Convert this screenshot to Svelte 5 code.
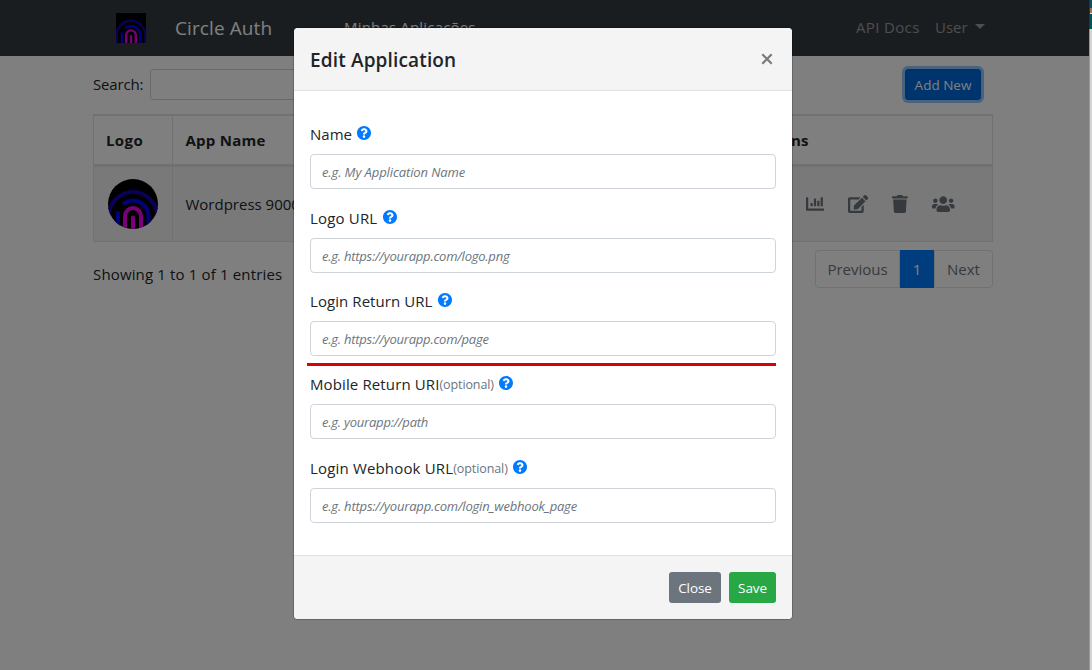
<script>
  const fields = [
    { label: 'Name', placeholder: 'e.g. My Application Name', k: 'a' },
    { label: 'Logo URL', placeholder: 'e.g. https://yourapp.com/logo.png', k: 'b' },
    { label: 'Login Return URL', placeholder: 'e.g. https://yourapp.com/page', k: 'c', marked: true },
    { label: 'Mobile Return URI', optional: true, placeholder: 'e.g. yourapp://path', k: 'd' },
    { label: 'Login Webhook URL', optional: true, placeholder: 'e.g. https://yourapp.com/login_webhook_page', k: 'e' }
  ];
  const actions = [
    { name: 'Statistics', w: 512, d: 'M332.8 320h38.4c6.4 0 12.8-6.4 12.8-12.8V172.8c0-6.4-6.4-12.8-12.8-12.8h-38.4c-6.4 0-12.8 6.4-12.8 12.8v134.4c0 6.4 6.4 12.8 12.8 12.8zm96 0h38.4c6.4 0 12.8-6.4 12.8-12.8V76.8c0-6.4-6.4-12.8-12.8-12.8h-38.4c-6.4 0-12.8 6.4-12.8 12.8v230.4c0 6.4 6.4 12.8 12.8 12.8zm-288 0h38.4c6.4 0 12.8-6.4 12.8-12.8v-70.4c0-6.4-6.4-12.8-12.8-12.8h-38.4c-6.4 0-12.8 6.4-12.8 12.8v70.4c0 6.4 6.4 12.8 12.8 12.8zm96 0h38.4c6.4 0 12.8-6.4 12.8-12.8V108.8c0-6.4-6.4-12.8-12.8-12.8h-38.4c-6.4 0-12.8 6.4-12.8 12.8v198.4c0 6.4 6.4 12.8 12.8 12.8zM496 384H64V80c0-8.84-7.16-16-16-16H16C7.16 64 0 71.16 0 80v336c0 17.67 14.33 32 32 32h464c8.84 0 16-7.16 16-16v-32c0-8.84-7.16-16-16-16z' },
    { name: 'Edit', w: 576, d: 'M402.6 83.2l90.2 90.2c3.8 3.8 3.8 10 0 13.8L274.4 405.6l-92.8 10.3c-12.4 1.4-22.9-9.1-21.5-21.5l10.3-92.8L388.8 83.2c3.8-3.8 10-3.8 13.8 0zm162-22.9l-48.8-48.8c-15.2-15.2-39.9-15.2-55.2 0l-35.4 35.4c-3.8 3.8-3.8 10 0 13.8l90.2 90.2c3.8 3.8 10 3.8 13.8 0l35.4-35.4c15.2-15.3 15.2-40 0-55.2zM384 346.2V448H64V128h229.8c3.2 0 6.2-1.3 8.5-3.5l40-40c7.6-7.6 2.2-20.5-8.5-20.5H48C21.5 64 0 85.5 0 112v352c0 26.5 21.5 48 48 48h352c26.5 0 48-21.5 48-48V306.2c0-10.7-12.9-16-20.5-8.5l-40 40c-2.2 2.3-3.5 5.3-3.5 8.5z' },
    { name: 'Delete', w: 448, d: 'M432 32H312l-9.4-18.7A24 24 0 0 0 281.1 0H166.8a23.72 23.72 0 0 0-21.4 13.3L136 32H16A16 16 0 0 0 0 48v32a16 16 0 0 0 16 16h416a16 16 0 0 0 16-16V48a16 16 0 0 0-16-16zM53.2 467a48 48 0 0 0 47.9 45h245.8a48 48 0 0 0 47.9-45L416 128H32z' },
    { name: 'Users', w: 640, d: 'M96 224c35.3 0 64-28.7 64-64s-28.7-64-64-64-64 28.7-64 64 28.7 64 64 64zm448 0c35.3 0 64-28.7 64-64s-28.7-64-64-64-64 28.7-64 64 28.7 64 64 64zm32 32h-64c-17.6 0-33.5 7.1-45.1 18.6 40.3 22.1 68.9 62 75.1 109.4h66c17.7 0 32-14.3 32-32v-32c0-35.3-28.7-64-64-64zm-256 0c61.9 0 112-50.1 112-112S381.9 32 320 32 208 82.1 208 144s50.1 112 112 112zm76.8 32h-8.3c-20.8 10-43.9 16-68.5 16s-47.6-6-68.5-16h-8.3C179.6 288 128 339.6 128 403.2V432c0 26.5 21.5 48 48 48h288c26.5 0 48-21.5 48-48v-28.8c0-63.6-51.6-115.2-115.2-115.2zm-223.7-13.4C161.5 263.1 145.6 256 128 256H64c-35.3 0-64 28.7-64 64v32c0 17.7 14.3 32 32 32h65.9c6.3-47.4 34.9-87.2 75.2-109.4z' }
  ];
</script>

{#snippet logo()}
  <svg class="logo" viewBox="0 0 50 50" fill="none" stroke-width="4" stroke-linecap="round">
    <rect width="50" height="50" fill="#000" />
    <path d="M1 52V37a24 24 0 0 1 48 0V52" stroke="#1400a8" />
    <path d="M10 52V34M16.5 24A15.7 15.7 0 0 1 40.5 37V52" stroke="#0800f8" />
    <path d="M17 52V37a8 8 0 0 1 16 0V52M25 52V38.5" stroke="#f400f4" />
  </svg>
{/snippet}

<div class="screen">
  <div class="page">
    <nav>
      <span class="navlogo">{@render logo()}</span>
      <span class="brand">Circle Auth</span>
      <span class="navitem active">Minhas Aplicações</span>
      <span class="navitem docs">API Docs</span>
      <span class="navitem user">User</span>
      <i class="caret"></i>
    </nav>
    <main>
      <div class="toolbar">
        <label class="search" for="search">Search:</label>
        <input class="searchbox" id="search" type="text" />
        <button class="add">Add New</button>
      </div>
      <div class="table">
        <div class="row head">
          <div class="cell c1 h1">Logo</div>
          <div class="cell c2 h2">App Name</div>
          <div class="cell c3 h3">Actions</div>
        </div>
        <div class="row item">
          <div class="cell c1"><span class="avatar">{@render logo()}</span></div>
          <div class="cell c2 app">Wordpress 9000</div>
          <div class="cell c3 icons">
            {#each actions as a}
              <svg aria-label={a.name} viewBox="0 0 {a.w} 512" style="width:{a.w * 18 / 512}px"><path d={a.d} /></svg>
            {/each}
          </div>
        </div>
      </div>
      <div class="below">
        <span class="info">Showing 1 to 1 of 1 entries</span>
        <div class="pages">
          <span class="prev">Previous</span><span class="current">1</span><span class="next">Next</span>
        </div>
      </div>
    </main>
    <div class="backdrop"></div>
  </div>
  <div class="edge"><div class="teal"></div></div>

  <div class="modal">
    <header>
      <h5>Edit Application</h5>
      <svg class="x" viewBox="0 0 12 12"><path d="M1.3 1.3L10.7 10.7M10.7 1.3L1.3 10.7" /></svg>
    </header>
    <form>
      {#each fields as f}
        <div class="field {f.k}">
          <div class="label">
            <span class="name">{f.label}</span>{#if f.optional}<small>(optional)</small>{/if}
            <svg class="help" viewBox="8 8 496 496"><path d="M504 256c0 136.997-111.043 248-248 248S8 392.997 8 256C8 119.083 119.043 8 256 8s248 111.083 248 248zM262.655 90c-54.497 0-89.255 22.957-116.549 63.758-3.536 5.286-2.353 12.415 2.715 16.258l34.699 26.31c5.205 3.947 12.621 3.008 16.665-2.122 17.864-22.658 30.113-35.797 57.303-35.797 20.429 0 45.698 13.148 45.698 32.958 0 14.976-12.363 22.667-32.534 33.976C247.128 238.528 216 254.941 216 296v4c0 6.627 5.373 12 12 12h56c6.627 0 12-5.373 12-12v-1.333c0-28.462 83.186-29.647 83.186-106.667 0-58.002-60.165-102-116.531-102zM256 338c-25.365 0-46 20.635-46 46 0 25.364 20.635 46 46 46s46-20.636 46-46c0-25.365-20.635-46-46-46z" /></svg>
          </div>
          <input type="text" placeholder={f.placeholder} />
          {#if f.marked}<div class="mark"></div>{/if}
        </div>
      {/each}
    </form>
    <footer>
      <button class="close">Close</button>
      <button class="save">Save</button>
    </footer>
  </div>
</div>

<style>
  :global(body) { overflow: hidden; }
  * { box-sizing: border-box; }
  .screen { position: relative; display: flex; width: 1092px; height: 670px; overflow: hidden; font: 400 15px/24px "Open Sans", "Noto Sans", sans-serif; color: #212529; white-space: nowrap; }
  .page { position: relative; width: 1089px; background: #fff; }
  .backdrop { position: absolute; inset: 0; background: rgba(0, 0, 0, .5); }
  .edge { width: 3px; background: linear-gradient(90deg, #999 1px, #d4d4d4 1px); }
  .teal { height: 29px; background: linear-gradient(90deg, #0b4248 1px, transparent 1px), linear-gradient(#04545c 8px, #a0705c 8px, #a0705c 13px, #e8e8c0 13px, #e8e8c0 14px, #04545c 14px); }
  nav { display: flex; align-items: center; height: 56px; padding-left: 116px; background: #343a40; color: #fff; }
  .logo { display: block; width: 100%; height: 100%; }
  .navlogo { width: 30px; height: 30px; }
  .brand { width: 169px; margin-left: 29px; font-size: 19px; letter-spacing: .1px; }
  .navitem { color: rgba(255, 255, 255, .5); margin-top: -2px; }
  .navitem.active { color: #fff; width: 512px; letter-spacing: .18px; margin-top: -2px; }
  .docs { width: 79px; letter-spacing: .35px; }
  .user { width: 40px; }
  .caret { border: 5px solid transparent; border-top-color: rgba(255, 255, 255, .5); border-bottom: 0; margin-top: -3px; }
  main { padding: 13px 96px 0 93px; }
  .toolbar { display: flex; align-items: center; height: 31px; }
  .search { width: 57px; margin-top: -2px; letter-spacing: -.15px; }
  .searchbox { width: 200px; height: 31px; border: 1px solid #ced4da; border-radius: 3px; background: #fff; }
  button { font: 400 13.5px/21px "Open Sans", "Noto Sans", sans-serif; color: #fff; height: 31px; padding: 0; border: 0; border-radius: 3px; }
  .add { width: 76px; margin-left: auto; margin-right: 12px; background: #0069d9; box-shadow: 0 0 0 3px rgba(38, 143, 255, .5); border: 1px solid #0062cc; padding-top: 1px; }
  .table { margin-top: 14px; width: 900px; border: 1px solid #dee2e6; border-top-width: 2px; }
  .row { display: flex; }
  .head { height: 51px; border-bottom: 3px solid #dee2e6; font-weight: 700; }
  .item { height: 74px; background: #f2f2f2; }
  .cell { display: flex; align-items: center; padding-left: 12px; }
  .c1 { width: 79px; border-right: 1px solid #dee2e6; }
  .h1 { letter-spacing: .4px; }
  .item .c1 { padding-left: 14px; }
  .c2 { width: 510px; padding-left: 12.5px; }
  .h2 { letter-spacing: .25px; }
  .h3 { padding-left: 68px; letter-spacing: .3px; }
  .avatar { width: 50px; height: 50px; border-radius: 50%; overflow: hidden; }
  .icons { padding-left: 123px; gap: 24px; fill: #6c757d; }
  .icons svg { height: 18px; flex: none; }
  .below { display: flex; justify-content: space-between; padding-top: 8px; }
  .info { padding-top: 12px; letter-spacing: .15px; }
  .pages { display: flex; height: 38px; width: 178px; color: #6c757d; text-align: center; }
  .pages span { border: 1px solid #dee2e6; line-height: 37px; }
  .prev { width: 85px; border-radius: 4px 0 0 4px; }
  .pages .current { width: 34px; background: #007bff; border-color: #007bff; color: #fff; }
  .next { flex: 1; border-radius: 0 4px 4px 0; }

  .modal { position: absolute; left: 293px; top: 27px; width: 500px; height: 593px; border: 1px solid rgba(0, 0, 0, .2); border-radius: 5px; background: #fff; background-clip: padding-box; overflow: hidden; }
  header { display: flex; align-items: center; justify-content: space-between; height: 63px; padding: 0 19px 0 16px; background: #f4f4f4; border-bottom: 1px solid #dee2e6; }
  h5 { margin: 2px 0 0; font-size: 19px; font-weight: 550; letter-spacing: .15px; line-height: 30px; }
  .x { width: 12px; height: 12px; fill: none; stroke: #7a7a7a; stroke-width: 2.2; }
  form { height: 464px; padding: 31px 16px 0; }
  .field { position: relative; height: 83px; }
  .field.a, .field.d { height: 84px; }
  .label { display: flex; align-items: center; height: 24px; margin-bottom: 8px; }
  small { font-size: 12.5px; color: #6c757d; padding-top: 2px; letter-spacing: -.1px; }
  .help { width: 14px; height: 14px; margin: -2px 0 0 5.5px; fill: #007bff; }
  .field input { display: block; width: 466px; height: 35px; margin: 0; padding: 1px 11px 0; border: 1px solid #ced4da; border-radius: 4px; font: italic 400 13px/20px "Open Sans", "Noto Sans", sans-serif; background: #fff; letter-spacing: -.23px; }
  .field input::placeholder { color: #6c757d; opacity: 1; }
  .field.a input { letter-spacing: -.1px; }
  .field.e input { letter-spacing: -.2px; }
  .b .name { letter-spacing: .18px; }
  .c .name { letter-spacing: .07px; }
  .d .name { letter-spacing: .12px; }
  .e .name { letter-spacing: .17px; }
  .mark { position: absolute; left: -3px; top: 74px; width: 469px; height: 3px; background: #d90007; }
  footer { display: flex; justify-content: flex-end; gap: 8px; height: 64px; padding: 16px 16px 0 0; background: #f4f4f4; border-top: 1px solid #dee2e6; }
  footer button { padding-top: 1px; letter-spacing: -.1px; }
  .close { width: 52px; background: #6c757d; }
  .save { width: 47px; background: #28a745; }
</style>
